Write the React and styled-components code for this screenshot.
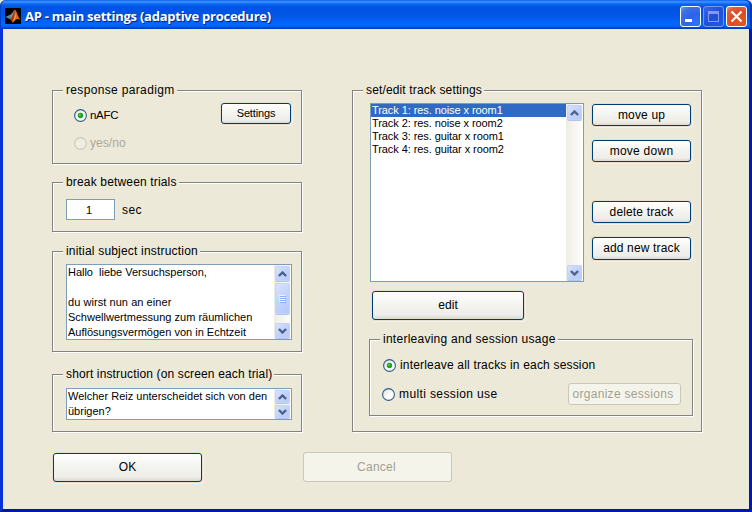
import React from "react";
import styled, { createGlobalStyle, css } from "styled-components";

const Global = createGlobalStyle`
  * { box-sizing: border-box; }
  html, body { margin: 0; padding: 0; overflow: hidden; background: #ece9d8; }
  button, input { font: inherit; color: inherit; margin: 0; padding: 0; }
`;

const Window = styled.div`
  width: 752px;
  height: 512px;
  display: flex;
  flex-direction: column;
  background: #ece9d8;
  font-family: "Liberation Sans", Arial, sans-serif;
  font-size: 12px;
  color: #000;
`;

const TitleBar = styled.header`
  height: 29px;
  flex: none;
  display: flex;
  align-items: center;
  padding: 3px 5px 0 5px;
  border-radius: 6px 6px 0 0;
  background: linear-gradient(
    to bottom,
    #0855dd 0, #2f86ff 1px, #3a92ff 2px, #0a66f0 4px, #0055e5 7px,
    #0054e3 12px, #0058e8 17px, #0364fb 22px, #0466ff 25px, #0059ea 27px, #0040c4 28px, #0038b8 29px
  );
  box-shadow: inset 1px 0 0 #0040c8, inset -2px 0 0 #0036b4;
`;

const Title = styled.h1`
  flex: 1;
  margin: 0 0 0 4px;
  font: 700 13px/16px "Open Sans", "Noto Sans", sans-serif;
  letter-spacing: ${(p) => p.$ls}px;
  color: #fff;
  text-shadow: 1px 1px 0 #0a1f83;
  white-space: pre;
`;

const Controls = styled.div`
  display: flex;
  gap: 2px;
`;

const captionFill = {
  min: "radial-gradient(circle at 80% 85%, #2f75ff 0, #2a63ea 40%, #3f6fe4 75%, #6d94f0 100%)",
  max: "linear-gradient(135deg, #3a68de, #1d50d8 50%, #1c5ce8)",
  close: "radial-gradient(circle at 75% 80%, #e8541c 0, #e04c22 50%, #e0603e 80%, #ee9a80 100%)",
};

const CaptionButton = styled.button`
  width: 21px;
  height: 21px;
  display: flex;
  border: 1px solid ${(p) => (p.$kind === "max" ? "#7597ec" : "#fff")};
  border-radius: 3px;
  background: ${(p) => captionFill[p.$kind]};
  svg { display: block; }
`;

const Client = styled.main`
  flex: 1;
  border: solid #0831d9;
  border-width: 0 3px 3px 3px;
  border-right-color: #0019b0;
  border-bottom-color: #0019a8;
  padding: 61px 47px 0 49px;
`;

const Columns = styled.div`
  display: grid;
  grid-template-columns: 250px 350px;
  column-gap: 50px;
  align-items: start;
`;

const Column = styled.div`
  display: flex;
  flex-direction: column;
`;

const Group = styled.section`
  height: ${(p) => p.$h}px;
  width: ${(p) => (p.$w ? `${p.$w}px` : "auto")};
  margin: ${(p) => p.$m || 0};
  border: 1px solid #848284;
  box-shadow: 1px 1px 0 #fff, inset 1px 1px 0 #fff;
  display: flex;
  flex-direction: column;
  align-items: flex-start;
`;

const Legend = styled.h2`
  flex: none;
  height: 14px;
  margin: -8px 0 0 10px;
  padding: 0 2px 0 3px;
  background: #ece9d8;
  font-size: 12px;
  font-weight: 400;
  line-height: 14px;
  letter-spacing: ${(p) => p.$ls}px;
  white-space: pre;
`;

const Row = styled.div`
  display: flex;
  align-items: ${(p) => p.$align || "flex-start"};
  justify-content: ${(p) => (p.$spread ? "space-between" : "flex-start")};
  width: ${(p) => (p.$w ? `${p.$w}px` : "auto")};
  margin: ${(p) => p.$m || 0};
`;

const Stack = styled.div`
  display: flex;
  flex-direction: column;
  align-items: flex-start;
  gap: ${(p) => p.$gap || 0}px;
  margin: ${(p) => p.$m || 0};
`;

const PushButton = styled.button`
  flex: none;
  width: ${(p) => p.$w}px;
  height: ${(p) => p.$h}px;
  margin: ${(p) => p.$m || 0};
  padding: 0 ${(p) => p.$pr || 0}px 1px 0;
  border: 1px solid #003c74;
  border-radius: 3px;
  background: linear-gradient(to bottom, #fff, #f4f4f0 45%, #eeede7 85%, #dcd8cd);
  box-shadow: 0 0 0 1px #e3dfce, 1px 1px 0 1px #f4f2e8;
  font-size: ${(p) => p.$size || 12}px;
  line-height: 14px;
  letter-spacing: ${(p) => p.$ls || 0}px;
  text-align: center;
  white-space: pre;
  &:disabled {
    color: #a1a192;
    background: #f5f4ea;
    border-color: #c9c7ba;
    box-shadow: none;
  }
`;

const RadioLabel = styled.label`
  display: flex;
  align-items: center;
  height: 13px;
  gap: ${(p) => p.$gap}px;
  font-size: ${(p) => p.$size || 12}px;
  line-height: 13px;
  letter-spacing: ${(p) => p.$ls || 0}px;
  color: ${(p) => (p.$off ? "#aca899" : "#000")};
  white-space: pre;
  svg { display: block; flex: none; }
`;

const Field = styled.input`
  width: 49px;
  height: 21px;
  border: 1px solid #7f9db9;
  background: #fff;
  font-size: 11px;
  text-align: center;
  padding: 0 3px 0 0;
  outline: 0;
`;

const Unit = styled.span`
  margin-left: 7px;
  line-height: 14px;
  letter-spacing: 0.4px;
`;

const Box = styled.div`
  flex: none;
  display: flex;
  width: ${(p) => p.$w}px;
  height: ${(p) => p.$h}px;
  margin: ${(p) => p.$m || 0};
  border: 1px solid #7f9db9;
  background: #fff;
`;

const BoxContent = styled.div`
  flex: 1;
  min-width: 0;
  overflow: hidden;
`;

const Line = styled.p`
  margin: 0;
  padding-left: 1px;
  height: 15px;
  font-size: 11px;
  line-height: 15px;
  letter-spacing: ${(p) => p.$ls || 0}px;
  white-space: pre;
`;

const Item = styled.div`
  height: 13px;
  font-size: 11px;
  line-height: 13px;
  letter-spacing: ${(p) => p.$ls || 0}px;
  white-space: pre;
  padding-left: 1px;
  ${(p) => p.$selected && css`
    background: #316ac5;
    color: #fff;
  `}
`;

const Scroll = styled.div`
  flex: none;
  width: 17px;
  display: flex;
  flex-direction: column;
  align-items: center;
  background: linear-gradient(to right, #eeede5, #fefefb);
`;

const ScrollButton = styled.div`
  flex: none;
  width: 15px;
  height: ${(p) => p.$h}px;
  margin: ${(p) => p.$m || "1px 0"};
  display: flex;
  align-items: center;
  justify-content: center;
  border-radius: 2px;
  background: linear-gradient(135deg, #dbe5fe, #c2d3fc 50%, #b4c8f6);
  box-shadow: inset 0 0 0 1px #c3d3fd, 0 1px 0 #b0c4ee;
`;

const Spacer = styled.div`
  flex: 1;
`;

const Actions = styled.footer`
  display: flex;
  align-items: flex-start;
  gap: 101px;
  margin: 20px 0 0 1px;
`;

function Radio({ checked, off }) {
  return (
    <svg width="13" height="13" viewBox="0 0 13 13">
      <defs>
        <linearGradient id="rad" x1="0" y1="0" x2="1" y2="1">
          <stop offset="0" stopColor="#dcdcd7" />
          <stop offset="0.6" stopColor="#fff" />
        </linearGradient>
      </defs>
      <circle cx="6.5" cy="6.5" r="5.9" fill={off ? "#efeddf" : "url(#rad)"} stroke={off ? "#cac8bb" : "#2d5b87"} strokeWidth="1.1" />
      {checked && <circle cx="6.5" cy="6.5" r="2.7" fill="#21a121" />}
      {checked && <circle cx="5.9" cy="5.9" r="1" fill="#55d551" />}
    </svg>
  );
}

function Chevron({ down }) {
  return (
    <svg width="9" height="6" viewBox="0 0 9 6">
      <path d={down ? "M0.9 1 L4.5 4.5 L8.1 1" : "M0.9 5 L4.5 1.5 L8.1 5"} fill="none" stroke="#4d6185" strokeWidth="2.4" />
    </svg>
  );
}

function Grip() {
  return (
    <svg width="7" height="8" viewBox="0 0 7 8" shapeRendering="crispEdges">
      <path d="M0 .5H6M0 2.5H6M0 4.5H6M0 6.5H6" stroke="#eef4fe" />
      <path d="M1 1.5H7M1 3.5H7M1 5.5H7M1 7.5H7" stroke="#8cb0f8" />
    </svg>
  );
}

function ScrollBar({ thumb, size = 15 }) {
  return (
    <Scroll>
      <ScrollButton $h={size} $m="1px 0 1px"><Chevron /></ScrollButton>
      {thumb && <ScrollButton $h={thumb} $m="1px 0 0"><Grip /></ScrollButton>}
      <Spacer />
      <ScrollButton $h={size} $m="0 0 1px"><Chevron down /></ScrollButton>
    </Scroll>
  );
}

function Logo() {
  return (
    <svg width="16" height="16" viewBox="0 0 16 16">
      <rect width="16" height="16" fill="#000" />
      <path d="M0.5 9 L4.5 7 L7 9.5 L4.5 11 Z" fill="#4e8fa8" />
      <path d="M4.5 7 C7 6.5 8 3 10 1.5 L8 8.5 L6 10.5 Z" fill="#7a8d98" />
      <path d="M10 1.5 C12 3.5 13 9 15.5 12 C13 10.5 11.5 10.5 10 12.5 C9 14 8 14.5 7 14.5 C7 12 6 11.5 4.5 11 C8 9.5 8.5 5 10 1.5 Z" fill="#e0661c" />
      <path d="M10 1.5 C9.8 6 9.6 10 7 14.5 C7 12 6 11.5 4.5 11 C8 9.5 8.5 5 10 1.5 Z" fill="#a8351b" />
      <path d="M10.3 5 C11 8 10.8 10.5 8 13.5 C9.5 10.5 10 8 10.3 5 Z" fill="#ffc24a" />
    </svg>
  );
}

const tracks = [
  "Track 1: res. noise x room1",
  "Track 2: res. noise x room2",
  "Track 3: res. guitar x room1",
  "Track 4: res. guitar x room2",
];

const initial = [
  ["Hallo  liebe Versuchsperson,", -0.02],
  ["", 0],
  ["du wirst nun an einer", 0.06],
  ["Schwellwertmessung zum räumlichen", 0.01],
  ["Auflösungsvermögen von in Echtzeit", 0],
];

const short = [
  ["Welcher Reiz unterscheidet sich von den", 0],
  ["übrigen?", 0],
];

export default function App() {
  return (
    <>
      <Global />
      <Window>
        <TitleBar>
          <Logo />
          <Title $ls={-0.25}>AP - main settings (adaptive procedure)</Title>
          <Controls>
            <CaptionButton $kind="min" aria-label="Minimize">
              <svg width="19" height="19"><rect x="4" y="12" width="7" height="3" fill="#fff" /></svg>
            </CaptionButton>
            <CaptionButton $kind="max" aria-label="Maximize">
              <svg width="19" height="19" shapeRendering="crispEdges">
                <path d="M4.5 4V15M14.5 4V15M4 14.5H15" stroke="#859be6" fill="none" />
                <rect x="4" y="4" width="11" height="3" fill="#859be6" />
              </svg>
            </CaptionButton>
            <CaptionButton $kind="close" aria-label="Close">
              <svg width="19" height="19"><path d="M4.5 4.5L14.5 14.5M14.5 4.5L4.5 14.5" stroke="#fff" strokeWidth="2.2" /></svg>
            </CaptionButton>
          </Controls>
        </TitleBar>
        <Client>
          <Columns>
            <Column>
              <Group $h={74}>
                <Legend $ls={0.34}>response paradigm</Legend>
                <Row $w={217} $spread $m="6px 0 0 21px">
                  <Stack $gap={15} $m="6px 0 0">
                    <RadioLabel $gap={3} $size={11.5} $ls={-0.3}><Radio checked />nAFC</RadioLabel>
                    <RadioLabel $gap={3} $ls={0.05} $off><Radio off />yes/no</RadioLabel>
                  </Stack>
                  <PushButton $w={70} $h={21} $size={11} $ls={-0.15}>Settings</PushButton>
                </Row>
              </Group>
              <Group $h={50} $m="18px 0 0">
                <Legend $ls={0.16}>break between trials</Legend>
                <Row $align="center" $m="10px 0 0 13px">
                  <Field defaultValue="1" />
                  <Unit>sec</Unit>
                </Row>
              </Group>
              <Group $h={101} $m="19px 0 0">
                <Legend $ls={0.19}>initial subject instruction</Legend>
                <Box $w={226} $h={76} $m="6px 0 0 13px">
                  <BoxContent>{initial.map(([t, ls], i) => <Line key={i} $ls={ls}>{t}</Line>)}</BoxContent>
                  <ScrollBar thumb={31} />
                </Box>
              </Group>
              <Group $h={58} $m="22px 0 0">
                <Legend $ls={0.14}>short instruction (on screen each trial)</Legend>
                <Box $w={226} $h={32} $m="7px 0 0 13px">
                  <BoxContent>{short.map(([t, ls], i) => <Line key={i} $ls={ls}>{t}</Line>)}</BoxContent>
                  <ScrollBar size={13} />
                </Box>
              </Group>
            </Column>
            <Group $h={342}>
              <Legend $ls={0.14}>set/edit track settings</Legend>
              <Row $m="6px 0 0 17px">
                <Box $w={214} $h={179}>
                  <BoxContent>
                    {tracks.map((t, i) => <Item key={t} $ls={-0.08} $selected={i === 0}>{t}</Item>)}
                  </BoxContent>
                  <ScrollBar />
                </Box>
                <Stack $m="1px 0 0 8px">
                  <PushButton $w={99} $h={22} $ls={0.15}>move up</PushButton>
                  <PushButton $w={99} $h={22} $ls={0.25} $m="14px 0 0">move down</PushButton>
                  <PushButton $w={99} $h={22} $ls={0.15} $m="39px 0 0">delete track</PushButton>
                  <PushButton $w={99} $h={23} $ls={0.15} $m="14px 0 0">add new track</PushButton>
                </Stack>
              </Row>
              <PushButton $w={152} $h={29} $ls={0.1} $m="9px 0 0 19px">edit</PushButton>
              <Group $w={324} $h={77} $m="19px 0 0 16px">
                <Legend $ls={0.26}>interleaving and session usage</Legend>
                <Stack $m="13px 0 0 13px">
                  <RadioLabel $gap={4} $ls={0.18}><Radio checked />interleave all tracks in each session</RadioLabel>
                  <Row $m="11px 0 0 -1px" $w={299} $spread>
                    <Stack $m="5px 0 0">
                      <RadioLabel $gap={4} $ls={0.38}><Radio />multi session use</RadioLabel>
                    </Stack>
                    <PushButton $w={113} $h={22} $ls={0.29} $pr={3} disabled>organize sessions</PushButton>
                  </Row>
                </Stack>
              </Group>
            </Group>
          </Columns>
          <Actions>
            <PushButton $w={149} $h={29} $m="1px 0 0">OK</PushButton>
            <PushButton $w={149} $h={30} $ls={0.25} $pr={2} disabled>Cancel</PushButton>
          </Actions>
        </Client>
      </Window>
    </>
  );
}
